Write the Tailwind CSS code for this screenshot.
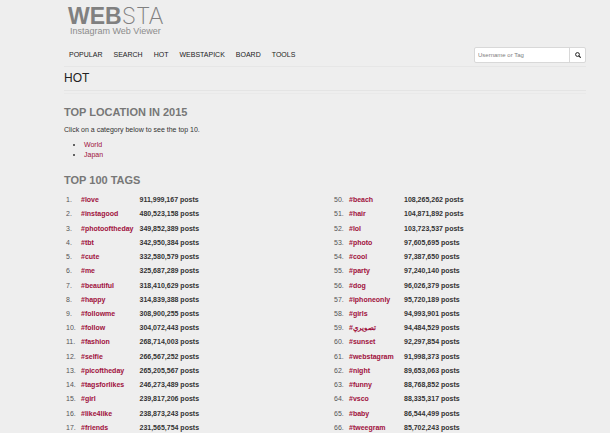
<!DOCTYPE html>
<html lang="en">
<head>
    <meta charset="UTF-8">
    <meta name="viewport" content="width=device-width, initial-scale=1.0">
    <title>WEBSTA - Hot</title>
    <script src="https://cdn.jsdelivr.net/npm/@tailwindcss/browser@4"></script>
</head>
<body class="bg-[#eeeeee] font-['Liberation_Sans',Arial,sans-serif] text-[7px] leading-[10px] text-[#333333]">
    <div class="pl-16 pr-6 pt-[6px]">
        <header>
            <a href="#" class="block w-fit pl-1 text-[#808080]">
                <span class="flex items-baseline text-[23px] leading-5">
                    <span class="font-bold">WEB</span>
                    <span class="font-['Inter',sans-serif] font-extralight">STA</span>
                </span>
                <span class="block pl-[2px] text-[9px] leading-[10px] text-[#8c8c8c]">Instagram Web Viewer</span>
            </a>
            <div class="mt-[1px] flex h-[30px] items-center justify-between border-b border-[#e6e6e6] pt-[6px]">
                <nav class="flex gap-[11px] pl-[5px] text-[#222222]">
                    <a href="#">POPULAR</a>
                    <a href="#">SEARCH</a>
                    <a href="#">HOT</a>
                    <a href="#">WEBSTAPICK</a>
                    <a href="#">BOARD</a>
                    <a href="#">TOOLS</a>
                </nav>
                <form class="flex h-4 w-28 rounded-[2px] border border-[#d8d8d8] bg-white">
                    <input type="text" aria-label="Username or Tag" placeholder="Username or Tag"
                            class="min-w-0 flex-1 px-[3px] text-[6px] placeholder:text-[#808080] focus:outline-none">
                    <button type="button" aria-label="Search" class="flex w-4 items-center justify-center border-l border-[#d8d8d8]">
                        <svg class="size-[6px]" fill="none" stroke="#222222" viewBox="0 0 12 12">
                            <circle cx="5" cy="5" r="3.8" stroke-width="2" />
                            <path stroke-linecap="round" stroke-width="2.4" d="M8.2 8.2L10.8 10.8" />
                        </svg>
                    </button>
                </form>
            </div>
        </header>

        <main>
            <h1 class="border-b border-[#e4e4e4] pt-[3px] pb-1 text-[12px] leading-4 text-[#222222]">HOT</h1>

            <section class="mt-[2px] border-t border-[#e9e9e9] pt-3">
                <h2 class="text-[11px] leading-3 font-bold text-[#777777]">TOP LOCATION IN 2015</h2>
                <p class="mt-[7px]">Click on a category below to see the top 10.</p>
                <ul class="mt-[5px] list-disc pl-5">
                    <li><a href="#" class="text-[#a0103c]">World</a></li>
                    <li><a href="#" class="text-[#a0103c]">Japan</a></li>
                </ul>
            </section>

            <section class="mt-[14px]">
                <h2 class="text-[11px] leading-3 font-bold text-[#777777]">TOP 100 TAGS</h2>
                <div class="mt-[7px] grid grid-cols-2 gap-[14px]">
                    <table class="h-[242px] w-fit" aria-label="Tags 1 to 49"><tbody id="tags-left"></tbody></table>
                    <table class="h-[242px] w-fit" aria-label="Tags 50 to 100"><tbody id="tags-right"></tbody></table>
                </div>
            </section>
        </main>
    </div>

    <script>
        const left = [
            ['love', '911,999,167'],
            ['instagood', '480,523,158'],
            ['photooftheday', '349,852,389'],
            ['tbt', '342,950,384'],
            ['cute', '332,580,579'],
            ['me', '325,687,289'],
            ['beautiful', '318,410,629'],
            ['happy', '314,839,388'],
            ['followme', '308,900,255'],
            ['follow', '304,072,443'],
            ['fashion', '268,714,003'],
            ['selfie', '266,567,252'],
            ['picoftheday', '265,205,567'],
            ['tagsforlikes', '246,273,489'],
            ['girl', '239,817,206'],
            ['like4like', '238,873,243'],
            ['friends', '231,565,754'],
        ];
        const right = [
            ['beach', '108,265,262'],
            ['hair', '104,871,892'],
            ['lol', '103,723,537'],
            ['photo', '97,605,695'],
            ['cool', '97,387,650'],
            ['party', '97,240,140'],
            ['dog', '96,026,379'],
            ['iphoneonly', '95,720,189'],
            ['girls', '94,993,901'],
            ['تصويري', '94,484,529'],
            ['sunset', '92,297,854'],
            ['webstagram', '91,998,373'],
            ['night', '89,653,063'],
            ['funny', '88,768,852'],
            ['vsco', '88,335,317'],
            ['baby', '86,544,499'],
            ['tweegram', '85,702,243'],
        ];

        function renderTags(id, tags, start) {
            document.getElementById(id).innerHTML = tags.map(([name, posts], i) => `
                <tr class="whitespace-nowrap">
                    <td class="w-[17px] pl-[2px] py-[2px] text-[#555555]">${start + i}.</td>
                    <td class="min-w-[55px] pr-[6px] py-[2px] font-bold"><a href="#" class="text-[#a0103c]">#${name}</a></td>
                    <td class="py-[2px] font-bold">${posts} posts</td>
                </tr>
            `).join('');
        }

        renderTags('tags-left', left, 1);
        renderTags('tags-right', right, 50);
    </script>
</body>
</html>
